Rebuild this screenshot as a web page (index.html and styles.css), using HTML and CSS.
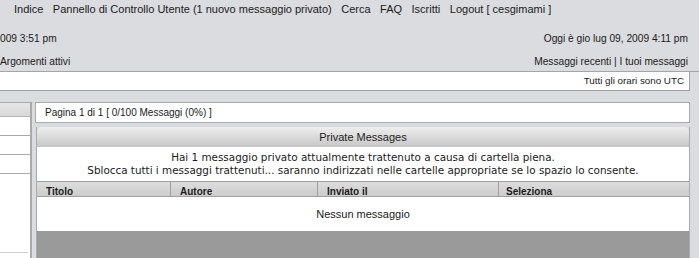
FILE: index.html
```html
<!DOCTYPE html>
<html lang="it">
<head>
<meta charset="utf-8">
<title>Messaggi privati</title>
<link rel="stylesheet" href="styles.css">
</head>
<body>
<div class="header">
  <nav class="nav">
    <a href="#">Indice</a>
    <a href="#">Pannello di Controllo Utente (1 nuovo messaggio privato)</a>
    <a href="#">Cerca</a>
    <a href="#">FAQ</a>
    <a href="#">Iscritti</a>
    <a href="#">Logout [ cesgimami ]</a>
  </nav>
  <div class="info">
    <span>009 3:51 pm</span>
    <span>Oggi è gio lug 09, 2009 4:11 pm</span>
  </div>
  <div class="info info-links">
    <a href="#">Argomenti attivi</a>
    <span><a href="#">Messaggi recenti</a> | <a href="#">I tuoi messaggi</a></span>
  </div>
</div>
<div class="utc">Tutti gli orari sono UTC</div>
<div class="content">
  <aside class="sidebar">
    <div class="side-head"></div>
    <div class="side-row"></div>
    <div class="side-row"></div>
    <div class="side-row"></div>
    <div class="side-fill"></div>
  </aside>
  <main class="main">
    <div class="pager">Pagina 1 di 1 [ 0/100 Messaggi (0%) ]</div>
    <section class="panel">
      <div class="panel-head">Private Messages</div>
      <div class="panel-msg">
        <div>Hai 1 messaggio privato attualmente trattenuto a causa di cartella piena.</div>
        <div>Sblocca tutti i messaggi trattenuti... saranno indirizzati nelle cartelle appropriate se lo spazio lo consente.</div>
      </div>
      <div class="cols">
        <div class="col c1">Titolo</div>
        <div class="col c2">Autore</div>
        <div class="col c3">Inviato il</div>
        <div class="col c4">Seleziona</div>
      </div>
      <div class="empty">Nessun messaggio</div>
      <div class="panel-foot"></div>
    </section>
  </main>
</div>
</body>
</html>
```
FILE: styles.css
```css
html, body {
  margin: 0;
  padding: 0;
  height: 100%;
  overflow: hidden;
}
body {
  background: #dbdcdf;
  font-family: "Liberation Sans", "DejaVu Sans", sans-serif;
  color: #1a1a1a;
}
a {
  color: #1a1a1a;
  text-decoration: none;
}
.header {
  height: 71px;
  border-bottom: 1px solid #a4a5a7;
  font-size: 11px;
}
.nav {
  display: flex;
  gap: 9.5px;
  padding-left: 14px;
  height: 18px;
  line-height: 18px;
}
.info {
  display: flex;
  justify-content: space-between;
  padding-right: 11px;
  margin-top: 12px;
  height: 18px;
  line-height: 18px;
  font-size: 10.2px;
}
.info-links {
  margin-top: 5px;
}
.utc {
  width: 684px;
  height: 18px;
  line-height: 18px;
  background: #fff;
  border-right: 1px solid #9fa0a2;
  border-bottom: 1px solid #9fa0a2;
  padding-right: 5px;
  text-align: right;
  font-size: 9.8px;
}
.content {
  display: flex;
  margin-top: 11px;
  height: 156px;
  overflow: hidden;
}
.sidebar {
  width: 30px;
  border-right: 2px solid #a9aaac;
  border-top: 1px solid #a9aaac;
  background: #fff;
  display: flex;
  flex-direction: column;
}
.side-head {
  height: 13px;
  flex: none;
  background: linear-gradient(#e6e6e6, #d9d9d9);
  border-bottom: 1px solid #b5b5b5;
}
.side-row {
  height: 18px;
  flex: none;
  border-bottom: 1px solid #a9a9a9;
}
.side-fill {
  height: 78px;
  flex: none;
  margin-right: 2px;
  border-bottom: 1px solid #d0d0d0;
}
.main {
  margin-left: 3px;
  width: 655px;
  display: flex;
  flex-direction: column;
}
.pager {
  height: 19px;
  flex: none;
  line-height: 19px;
  background: #fff;
  border: 1px solid #a9aaac;
  padding-left: 9px;
  font-size: 10px;
}
.panel {
  margin-top: 4px;
  margin-left: 1px;
  flex: 1;
  display: flex;
  flex-direction: column;
  border-left: 1px solid #a9aaac;
  border-right: 1px solid #a9aaac;
}
.panel-head {
  height: 20px;
  flex: none;
  line-height: 20px;
  text-align: center;
  font-size: 11px;
  color: #222;
  border-radius: 5px 5px 0 0;
  background: linear-gradient(#eeeeee, #c6c6c6);
}
.panel-msg {
  background: #fff;
  flex: none;
  padding: 4px 0 4px;
  height: 26px;
  line-height: 13px;
  text-align: center;
  font-family: "DejaVu Sans", "Liberation Sans", sans-serif;
  font-size: 10.4px;
  white-space: nowrap;
}
.cols {
  display: flex;
  flex: none;
  height: 14px;
  border-top: 1px solid #a0a0a0;
  border-bottom: 1px solid #a0a0a0;
  background: linear-gradient(#dcdcdc, #cdcdcd);
  font-size: 10px;
  font-weight: bold;
  line-height: 20px;
  overflow: hidden;
}
.col {
  padding-left: 9px;
  border-right: 1px solid #a0a0a0;
  box-sizing: border-box;
}
.c1 { width: 134px; }
.c2 { width: 147px; }
.c3 { width: 181px; }
.c4 { flex: 1; border-right: 0; padding-left: 7px; }
.empty {
  background: #fff;
  flex: none;
  height: 34px;
  line-height: 34px;
  text-align: center;
  font-size: 11px;
}
.panel-foot {
  flex: 1;
  background: #9a9a9a;
}
```
